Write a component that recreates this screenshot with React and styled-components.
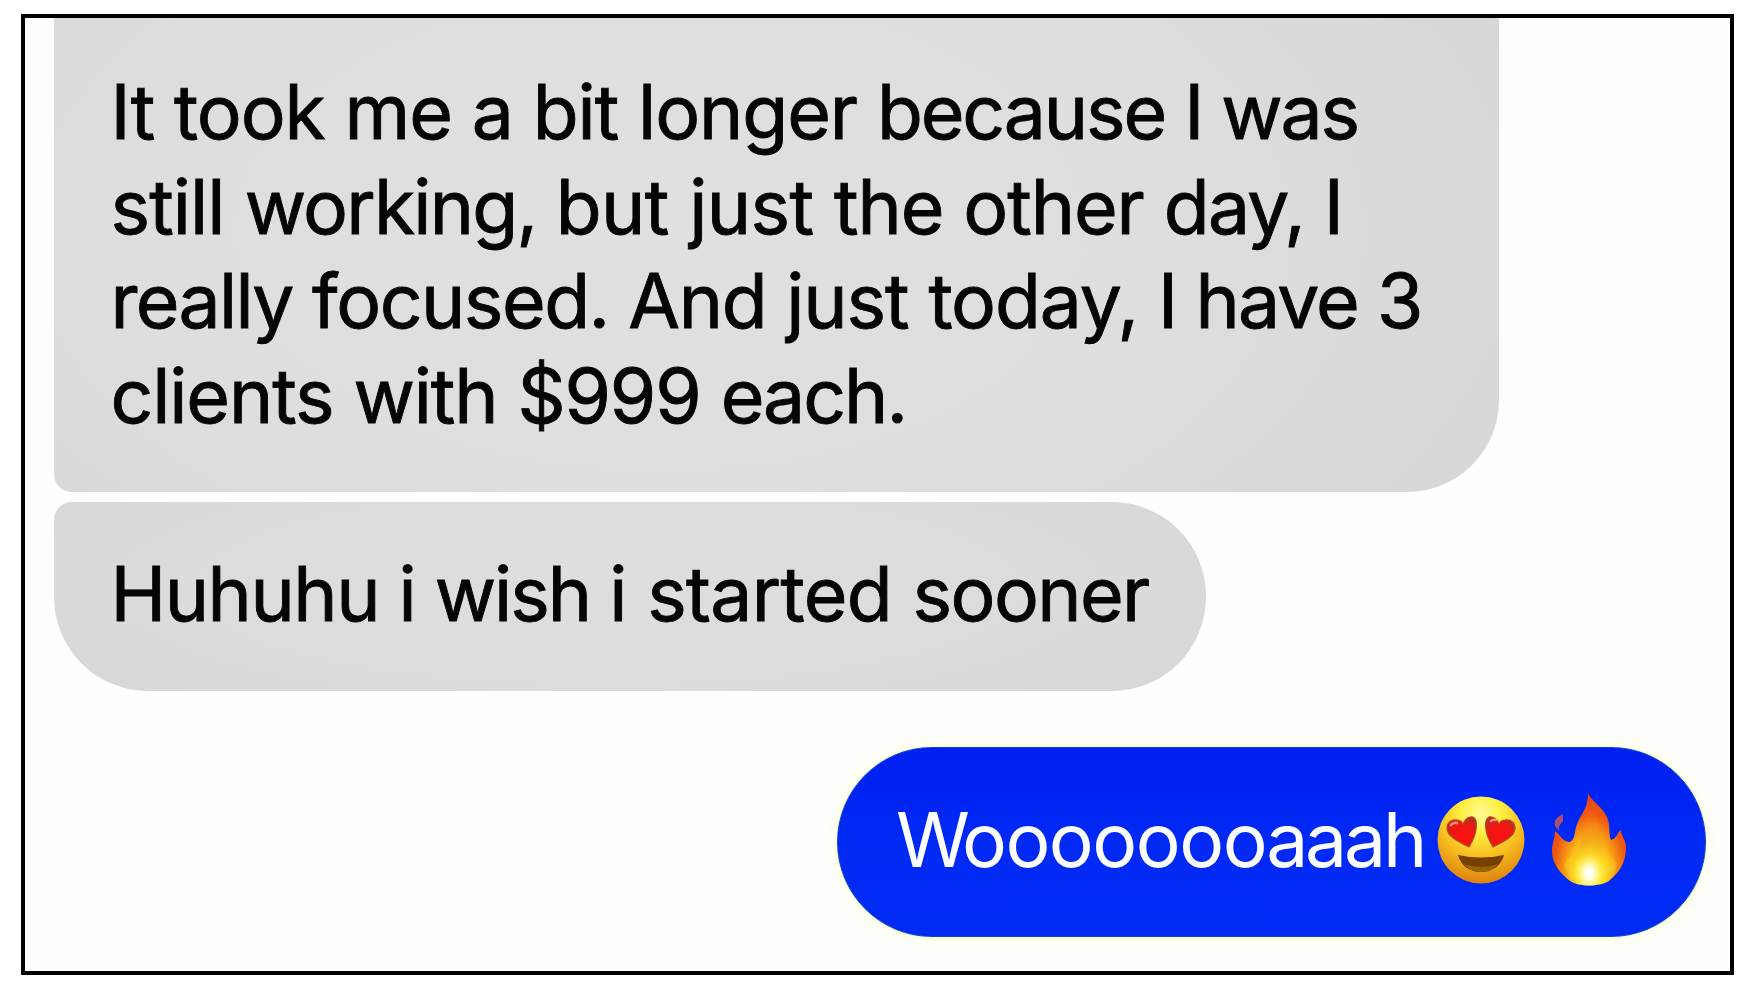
import React from "react";
import styled, { createGlobalStyle } from "styled-components";

const GlobalStyle = createGlobalStyle`
  body {
    margin: 0;
    background: #fff;
  }
`;

const Page = styled.main`
  box-sizing: border-box;
  width: 1755px;
  height: 986px;
  padding: 14px 21px 11px;
  background: #fff;
`;

const Chat = styled.section`
  box-sizing: border-box;
  display: flex;
  flex-direction: column;
  align-items: flex-start;
  width: 1713px;
  height: 961px;
  padding: 0 24px 0 29px;
  border: 4px solid #000;
  background: #fefefe;
  overflow: hidden;
`;

const Bubble = styled.div`
  box-sizing: border-box;
  flex: none;
  font-family: Inter, "Liberation Sans", sans-serif;
  font-size: 75px;
  font-weight: 400;
  line-height: 94.6px;
  white-space: pre;
`;

const Received = styled(Bubble)`
  padding-left: 56.5px;
  color: #050505;
  -webkit-text-stroke: 0.9px #050505;
`;

const LongMessage = styled(Received)`
  width: 1445px;
  height: 474px;
  padding-top: 47px;
  border-radius: 0 0 92px 18px;
  background: radial-gradient(ellipse 1100px 620px at 42% 45%, #e0e0e0, #dedede 45%, #d4d4d4);
`;

const ShortMessage = styled(Received)`
  width: 1152px;
  height: 189px;
  margin-top: 10px;
  padding-top: 45px;
  border-radius: 18px 94px 94px 94px;
  background: radial-gradient(ellipse 800px 190px at 48% 45%, #dedede, #dcdcdc 50%, #d6d6d6);
`;

const Sent = styled(Bubble)`
  display: flex;
  align-items: flex-start;
  align-self: flex-end;
  width: 869px;
  height: 190px;
  margin-top: 56px;
  padding: 45px 0 0 58px;
  border: 1px solid #1645b8;
  border-radius: 95px;
  background: linear-gradient(#001ff2, #0029f4 50%, #002bf5);
  box-shadow: 0 0 2px #b8e8ff, 0 0 16px 2px #ffffdc;
  color: #fafcff;
`;

const Line = styled.div`
  height: 94.6px;
`;

const SentText = styled(Line)`
  width: 530px;
`;

const Run = styled.span`
  letter-spacing: ${(p) => p.$spacing}px;
`;

const Emoji = styled.svg`
  flex: none;
  width: 88px;
  height: 96px;
  margin-left: ${(p) => p.$gap}px;
`;

// each line is a list of [text, letter spacing]
const longLines = [
  [["It took me a bit longer ", -1.1], ["because I was", -2.1]],
  [["still ", -0.9], ["working, ", -1.75], ["but just ", -0.6], ["the other ", -1.1], ["day, I", -1.7]],
  [["really ", -1.7], ["focused. ", -1.5], ["And ", -1.3], ["just today, ", -1.1], ["I have 3", -1.85]],
  [["clients with $999 ", -1.1], ["each.", -2]],
];

const shortLine = [["Huhuhu ", -1.5], ["i ", -1.6], ["wish ", -2], ["i started ", -0.65], ["sooner", -1.6]];

const sentLine = [["W", -8], ["ooooooo", -1.5], ["aaah", -3.2]];

const renderRuns = (runs) =>
  runs.map(([text, spacing], idx) => (
    <Run key={idx} $spacing={spacing}>
      {text}
    </Run>
  ));

const HeartEyes = () => (
  <Emoji $gap={10.5} viewBox="0 0 88 96">
    <defs>
      <radialGradient id="face" cx="50%" cy="20%" r="78%">
        <stop offset="0" stopColor="#fffb9a" />
        <stop offset=".28" stopColor="#fff044" />
        <stop offset=".62" stopColor="#f8c020" />
        <stop offset="1" stopColor="#df8510" />
      </radialGradient>
      <radialGradient id="heart" cx="50%" cy="60%" r="60%">
        <stop offset="0" stopColor="#ff1212" />
        <stop offset=".65" stopColor="#ec1713" />
        <stop offset="1" stopColor="#b92e24" />
      </radialGradient>
    </defs>
    <circle cx="44" cy="47" r="43.5" fill="url(#face)" />
    <g fill="url(#heart)" stroke="#b94b18" strokeWidth="1.2">
      <path d="M32 54C20 48 10 43 10 35c0-6 5-9 10-8 3 0 5 2 6 4 2-5 6-8 10-7 4 2 4 7 3 13-1 7-4 12-7 17z" />
      <path d="M56 54c12-6 22-11 22-19 0-6-5-9-10-8-3 0-5 2-6 4-2-5-6-8-10-7-4 2-4 7-3 13 1 7 4 12 7 17z" />
    </g>
    <path d="M14 32q3-3 6-2M54 28q2-2 5-1" fill="none" stroke="#ff8a78" strokeWidth="2.5" strokeLinecap="round" />
    <path d="M21 62q23 5 46 0c-3 11-12 17-23 17s-20-6-23-17z" fill="#754000" />
    <path d="M27 71q17 6 34 0c-4 5-10 8-17 8s-13-3-17-8z" fill="#956300" />
  </Emoji>
);

const Fire = () => (
  <Emoji $gap={21} viewBox="0 0 88 96">
    <defs>
      <radialGradient id="flame" gradientUnits="userSpaceOnUse" cx="44" cy="78" r="76" gradientTransform="translate(15.8 0) scale(.64 1)">
        <stop offset="0" stopColor="#fff47a" />
        <stop offset=".3" stopColor="#ffdc20" />
        <stop offset=".5" stopColor="#f8a012" />
        <stop offset=".74" stopColor="#ef5a12" />
        <stop offset="1" stopColor="#ea4310" />
      </radialGradient>
      <linearGradient id="core" x1="0" y1="0" x2="0" y2="1">
        <stop offset="0" stopColor="#f47a16" stopOpacity="0" />
        <stop offset=".45" stopColor="#f3a21a" stopOpacity=".7" />
        <stop offset=".75" stopColor="#fbd824" stopOpacity=".4" />
        <stop offset="1" stopColor="#fff98a" stopOpacity="0" />
      </linearGradient>
      <radialGradient id="glow">
        <stop offset="0" stopColor="#fff" />
        <stop offset=".25" stopColor="#fffff0" />
        <stop offset="1" stopColor="#ffff54" stopOpacity="0" />
      </radialGradient>
      <clipPath id="flameEdge">
        <path d="M42 0c3 8 14 13 19 24 4 10 1 16 4 23 6-1 6-8 10-10 0 7 5 8 5 18 0 17-9 26-17 33-10 6-30 6-39 0C14 80 6 71 6 58c0-8 3-12 3-20 6 4 7 11 15 11 6-3 4-13 8-20 3-8 10-13 10-29z" />
      </clipPath>
    </defs>
    <g clipPath="url(#flameEdge)">
      <rect width="88" height="96" fill="url(#flame)" />
      <path d="M43 14c0 14-8 22-8 36-2 11-13 12-17 21 2 9 7 15 12 18 8 3 22 3 30 0 5-4 9-9 11-18-5-8-13-11-14-22-2-12-4-24-14-35z" fill="url(#core)" />
      <ellipse cx="43" cy="80" rx="15" ry="20" fill="url(#glow)" />
    </g>
    <path d="M17 21c-6 3-9 6-8 12l4 5c-1-6 2-7 4-10z" fill="#a9506e" />
  </Emoji>
);

const App = () => (
  <>
    <GlobalStyle />
    <Page>
      <Chat>
        <LongMessage>
          {longLines.map((runs, idx) => (
            <Line key={idx}>{renderRuns(runs)}</Line>
          ))}
        </LongMessage>
        <ShortMessage>
          <Line>{renderRuns(shortLine)}</Line>
        </ShortMessage>
        <Sent>
          <SentText>{renderRuns(sentLine)}</SentText>
          <HeartEyes />
          <Fire />
        </Sent>
      </Chat>
    </Page>
  </>
);

export default App;
